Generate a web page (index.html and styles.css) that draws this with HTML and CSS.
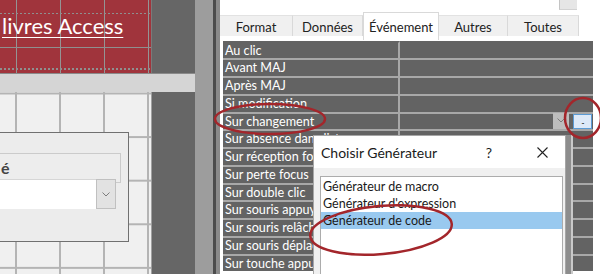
FILE: index.html
```html
<!DOCTYPE html>
<html lang="fr">
<head>
    <meta charset="UTF-8">
    <meta name="viewport" content="width=device-width, initial-scale=1.0">
    <title>Choisir Générateur</title>
    <link rel="stylesheet" href="styles.css">
</head>
<body>
    <div class="screen">
        <div class="designer">
            <div class="form-header"><span class="form-title">livres Access</span></div>
            <div class="margin"></div>
            <div class="section-bar"></div>
            <div class="detail">
                <div class="control">
                    <div class="group"><span class="group-label">é</span></div>
                    <div class="combo">
                        <span class="combo-field"></span>
                        <span class="combo-btn">
                            <svg width="8" height="5" viewBox="0 0 8 5"><polyline points="0.5,0.5 4,4 7.5,0.5" /></svg>
                        </span>
                    </div>
                </div>
            </div>
            <div class="margin"></div>
        </div>

        <div class="scroll-strip"></div>
        <div class="splitter"></div>

        <div class="props">
            <div class="props-top"><span class="mini-box"></span></div>
            <div class="tabs">
                <div class="tab">Format</div>
                <div class="tab">Données</div>
                <div class="tab active">Événement</div>
                <div class="tab">Autres</div>
                <div class="tab">Toutes</div>
            </div>
            <div class="prop-grid">
                <div class="prop-name">Au clic</div><div class="prop-value"></div>
                <div class="prop-name">Avant MAJ</div><div class="prop-value"></div>
                <div class="prop-name">Après MAJ</div><div class="prop-value"></div>
                <div class="prop-name">Si modification</div><div class="prop-value"></div>
                <div class="prop-name">Sur changement</div>
                <div class="prop-value">
                    <span class="drop-btn">
                        <svg width="8" height="5" viewBox="0 0 8 5"><polyline points="0.5,0.5 4,4 7.5,0.5" /></svg>
                    </span>
                    <span class="build-btn">...</span>
                </div>
                <div class="prop-name">Sur absence dans liste</div><div class="prop-value"></div>
                <div class="prop-name">Sur réception focus</div><div class="prop-value"></div>
                <div class="prop-name">Sur perte focus</div><div class="prop-value"></div>
                <div class="prop-name">Sur double clic</div><div class="prop-value"></div>
                <div class="prop-name">Sur souris appuyée</div><div class="prop-value"></div>
                <div class="prop-name">Sur souris relâchée</div><div class="prop-value"></div>
                <div class="prop-name">Sur souris déplacée</div><div class="prop-value"></div>
                <div class="prop-name">Sur touche appuyée</div><div class="prop-value"></div>
            </div>
        </div>

        <div class="builder">
            <div class="builder-title">
                <span class="title-text">Choisir Générateur</span>
                <span class="help">?</span>
                <span class="close">
                    <svg width="11" height="11" viewBox="0 0 11 11"><path d="M0.5 0.5 L10.5 10.5 M10.5 0.5 L0.5 10.5" /></svg>
                </span>
            </div>
            <div class="builder-body">
                <ul class="builder-list">
                    <li>Générateur de macro</li>
                    <li>Générateur d'expression</li>
                    <li class="selected">Générateur de code</li>
                </ul>
            </div>
        </div>

        <!-- red annotation marks -->
        <svg class="marks" width="600" height="274" viewBox="0 0 600 274">
            <ellipse cx="270" cy="119" rx="55" ry="15" />
            <ellipse cx="583" cy="118" rx="18" ry="20" />
            <ellipse cx="381" cy="230" rx="71" ry="24" transform="rotate(-5 381 230)" />
        </svg>
    </div>
</body>
</html>
```

FILE: styles.css
```css
* {
    box-sizing: border-box;
}

body {
    margin: 0;
    font-family: Lato, "Open Sans", sans-serif;
    background: #fff;
    overflow: hidden;
}

.screen {
    position: relative;
    display: flex;
    width: 600px;
    height: 274px;
    overflow: hidden;
}

/* form designer on the left */
.designer {
    flex: none;
    width: 195px;
    display: grid;
    grid-template-columns: 152px 43px;
    grid-template-rows: 73px 19px 1fr;
}

.form-header {
    background-color: #a0343c;
    background-image:
        linear-gradient(to right, #8f8f8f 50%, transparent 50%),
        linear-gradient(#8f8f8f, #8f8f8f),
        linear-gradient(to right, #8f8f8f 50%, transparent 50%),
        linear-gradient(to right, #949494 1px, transparent 1px);
    background-size: 4px 1px, 100% 1px, 4px 2px, 44px 100%;
    background-position: 0 13px, 0 47px, 0 68px, 16px 0;
    background-repeat: repeat-x, no-repeat, repeat-x, repeat-x;
    border-right: 1px solid #7a7a7a;
    padding: 13px 0 0 2px;
    color: #fff;
    white-space: nowrap;
}

.form-title {
    font-size: 22px;
    line-height: 1.2;
    text-decoration: underline;
    text-decoration-thickness: 1px;
    text-underline-offset: 3px;
}

.margin {
    background: #666;
}

.section-bar {
    grid-column: 1 / -1;
    background: #d5d5d5;
    border-top: 1px solid #8a8a8a;
}

.detail {
    position: relative;
    background-color: #f0f0f0;
    background-image:
        linear-gradient(to right, #b4b4b4 2px, transparent 2px),
        linear-gradient(to bottom, #b4b4b4 2px, transparent 2px);
    background-size: 44px 100%, 100% 43.6px;
    background-position: 15px 0, 0 0.5px;
    border-right: 1px solid #a0a0a0;
}

.control {
    position: absolute;
    left: -12px;
    top: 40px;
    width: 141px;
    height: 110px;
    background: #ececec;
    border: 1px solid #707070;
    padding: 20px 7px 0 0;
}

.group {
    height: 30px;
    border: 1px solid #cbcbcb;
    background: #ededed;
    padding: 4px 0 0 11px;
}

.group-label {
    font-size: 16px;
    font-weight: bold;
    color: #444;
}

.combo {
    display: flex;
    height: 30px;
    margin: -4px 5px 0 0;
}

.combo-field {
    flex: 1;
    background: #fff;
    border-top: 1px solid #d6d6d6;
}

.combo-btn {
    width: 20px;
    background: #e2e2e2;
    border: 1px solid #c0c0c0;
    display: flex;
    align-items: center;
    justify-content: center;
}

.combo-btn svg,
.drop-btn svg {
    fill: none;
    stroke: #7c7c7c;
    stroke-width: 1;
}

.scroll-strip {
    flex: none;
    width: 18px;
    background: #9d9d9d;
}

.splitter {
    flex: none;
    width: 7px;
    background: #8a8a8a;
    border-left: 3px solid #4c4c4c;
}

/* property sheet */
.props {
    flex: 1;
    display: flex;
    flex-direction: column;
    background: #fff;
}

.props-top {
    height: 12px;
    display: flex;
    justify-content: flex-end;
    padding-right: 23px;
}

.mini-box {
    width: 18px;
    height: 10px;
    background: #e6e6e6;
    border-left: 1px solid #c4c4c4;
    border-bottom: 1px solid #d2d2d2;
}

.tabs {
    display: grid;
    grid-template-columns: 73px 70px 76px 69px 71px;
    height: 28px;
    align-items: start;
}

.tab {
    margin-top: 3px;
    height: 21px;
    padding-top: 1px;
    background: #f0f0f0;
    border-right: 1px solid #d9d9d9;
    border-top: 1px solid #e2e2e2;
    font-size: 13px;
    color: #222;
    display: flex;
    align-items: center;
    justify-content: center;
}

.tab.active {
    margin-top: 0;
    height: 28px;
    padding-top: 0;
    background: #fff;
    border: 1px solid #d9d9d9;
    border-bottom: none;
}

.prop-grid {
    display: grid;
    grid-template-columns: 177px 193px;
    grid-auto-rows: 17.75px;
    margin: 0.5px 0 0 3px;
}

.prop-name,
.prop-value {
    background: #636363;
    border-top: 2px solid #a8a8a8;
}

.prop-grid > :nth-child(-n+2) {
    border-top-color: #636363;
}

.prop-name {
    border-right: 2px solid #a8a8a8;
    padding-left: 2px;
    color: #fff;
    font-size: 12.6px;
    line-height: 15.75px;
    white-space: nowrap;
}

.prop-value {
    display: flex;
    justify-content: flex-end;
    align-items: stretch;
    gap: 4px;
    padding-right: 1px;
}

.drop-btn {
    width: 16px;
    margin-top: -1px;
    background: #bdbdbd;
    display: flex;
    align-items: center;
    justify-content: center;
}

.build-btn {
    width: 19px;
    background: #dde9f8;
    border: 1px solid #5b9bd5;
    font-size: 7px;
    letter-spacing: -1px;
    color: #222;
    display: flex;
    align-items: center;
    justify-content: center;
}

/* builder dialog */
.builder {
    position: absolute;
    left: 313px;
    top: 135px;
    width: 253px;
    height: 150px;
    background: #f0f0f0;
    border: 1px solid #a6a6a6;
    box-shadow: 5px 0 0 #8d8d8d, 7px 0 0 #c9c9c9;
}

.builder-title {
    height: 32px;
    background: #fff;
    display: flex;
    align-items: center;
    padding-left: 7px;
    font-size: 14px;
    color: #1a1a1a;
}

.title-text {
    flex: 1;
}

.help {
    width: 46px;
    margin-right: 7px;
    text-align: center;
    font-size: 14px;
}

.close {
    width: 46px;
    display: flex;
    justify-content: center;
}

.close svg {
    stroke: #222;
    stroke-width: 1.1;
}

.builder-body {
    padding: 8px 2px 0 6px;
}

.builder-list {
    list-style: none;
    margin: 0;
    padding: 1px 0;
    height: 120px;
    background: #fff;
    border: 1px solid #acacac;
}

.builder-list li {
    height: 17px;
    line-height: 17px;
    padding-left: 2px;
    font-size: 12.5px;
    color: #1a1a1a;
}

.builder-list li.selected {
    background: #99c9ef;
}

.marks {
    position: absolute;
    left: 0;
    top: 0;
    pointer-events: none;
    fill: none;
    stroke: #a3262b;
    stroke-width: 2.5;
}
```
